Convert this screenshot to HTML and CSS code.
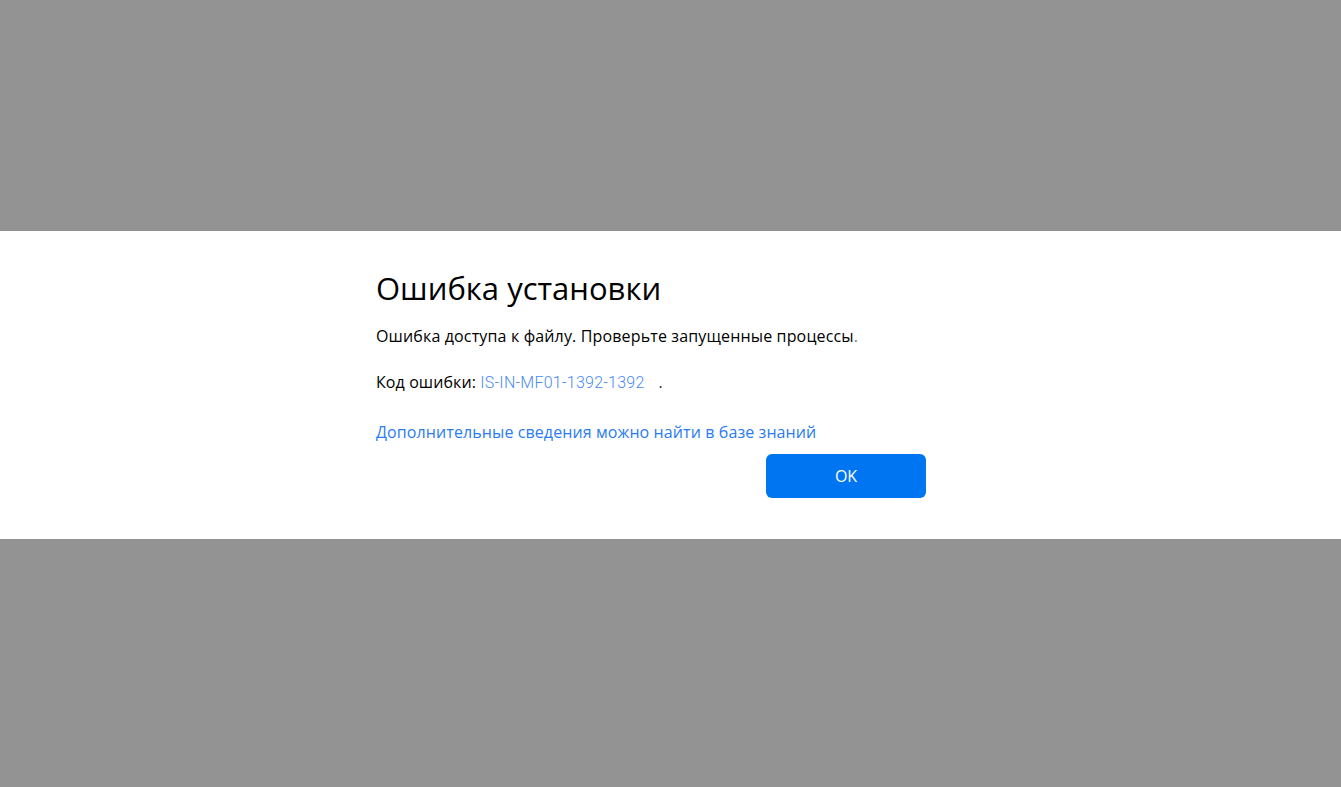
FILE: index.html
```html
<!DOCTYPE html>
<html>
<head>
    <title>Ошибка установки</title>
    <link rel="stylesheet" href="styles.css">
</head>
<body>
    <div class="overlay">
        <div class="dialog">
            <div class="dialog-inner">
                <h1 class="dialog-title">Ошибка установки</h1>
                <p class="dialog-text">Ошибка доступа к файлу. Проверьте запущенные процессы<span class="dot">.</span></p>
                <p class="dialog-code">Код ошибки: <a class="code-link" href="#">IS-IN-MF01-1392-1392</a><span class="code-end">.</span></p>
                <a class="kb-link" href="#">Дополнительные сведения можно найти в базе знаний</a>
                <div class="dialog-actions">
                    <button class="ok-button">OK</button>
                </div>
            </div>
        </div>
    </div>
</body>
</html>
```

FILE: styles.css
```css
body {
    margin: 0;
    height: 100vh;
    background-color: #939393;
    font-family: "Open Sans", "Noto Sans", sans-serif;
}

.overlay {
    padding-top: 231px;
}

.dialog {
    background-color: #fff;
    height: 308px;
    box-sizing: border-box;
    padding-top: 35px;
}

.dialog-inner {
    width: 550px;
    margin-left: 376px;
}

.dialog-title {
    margin: 0;
    font-size: 31px;
    font-weight: 400;
    line-height: 44px;
    color: #000;
}

.dialog-text {
    margin: 14px 0 0;
    font-size: 16px;
    line-height: 24px;
    letter-spacing: 0.15px;
    color: #000;
}

.dot {
    color: #777;
}

.dialog-code {
    margin: 22px 0 0;
    font-size: 16px;
    line-height: 24px;
    letter-spacing: 0.1px;
    color: #000;
}

.code-link {
    font-family: "Roboto", sans-serif;
    font-weight: 300;
    letter-spacing: 0.25px;
    color: #4a8af2;
    text-decoration: none;
    margin-right: 14px;
}

.code-end {
    color: #333;
}

.kb-link {
    display: block;
    margin-top: 25px;
    font-size: 16px;
    line-height: 24px;
    letter-spacing: 0.1px;
    color: #2a7cf2;
    text-decoration: none;
}

.dialog-actions {
    display: flex;
    justify-content: flex-end;
    margin-top: 10px;
}

.ok-button {
    width: 160px;
    height: 44px;
    border: none;
    border-radius: 6px;
    background-color: #0075f2;
    color: #fff;
    font-family: "Open Sans", "Noto Sans", sans-serif;
    font-size: 16px;
    cursor: pointer;
}
```
